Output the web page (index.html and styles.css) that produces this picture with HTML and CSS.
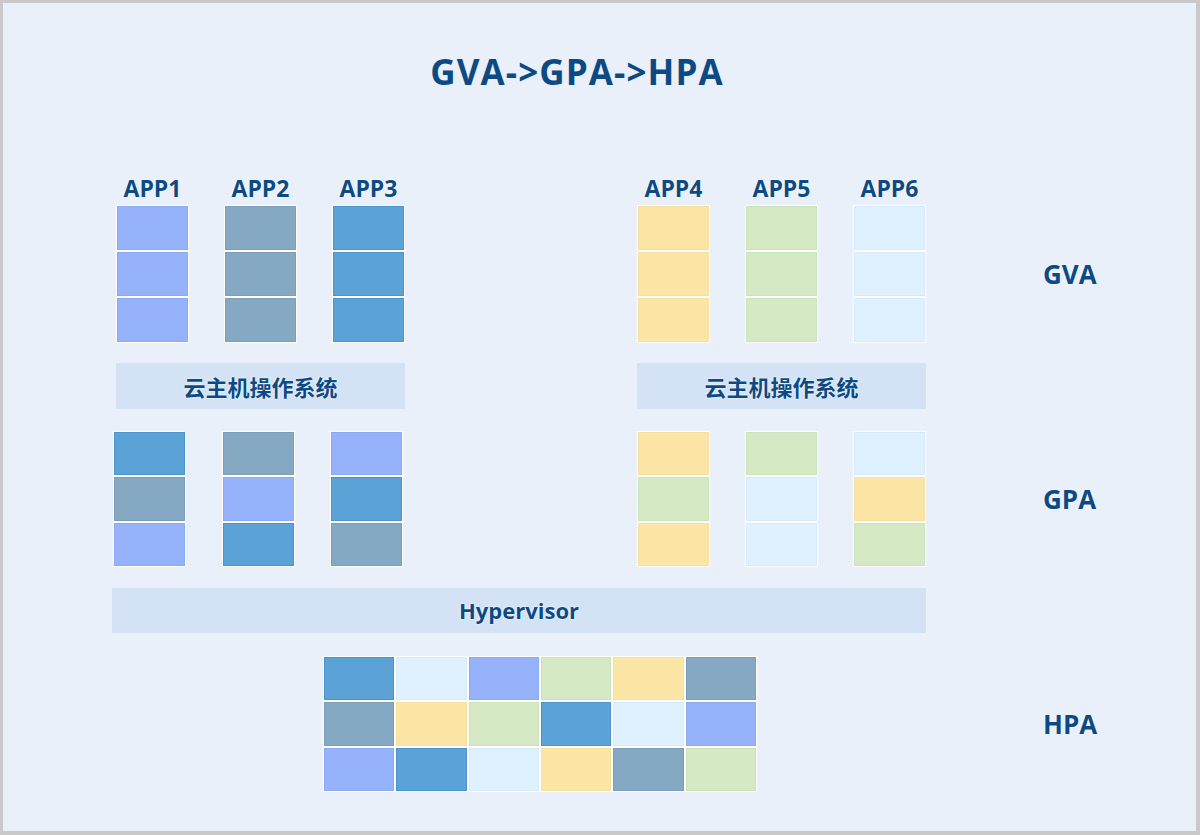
FILE: index.html
```html
<!DOCTYPE html>
<html lang="zh-CN">
<head>
<meta charset="utf-8">
<title>GVA->GPA->HPA</title>
<link rel="stylesheet" href="styles.css">
</head>
<body>
<div class="frame">
  <h1 class="title">GVA-&gt;GPA-&gt;HPA</h1>

  <div class="app-labels">
    <div class="group group-gva-left">
      <div class="app-label">APP1</div>
      <div class="app-label">APP2</div>
      <div class="app-label">APP3</div>
    </div>
    <div class="group group-gva-right">
      <div class="app-label">APP4</div>
      <div class="app-label">APP5</div>
      <div class="app-label">APP6</div>
    </div>
  </div>

  <div class="layer layer-gva">
    <div class="groups">
      <div class="group group-gva-left">
        <div class="stack"><div class="cell c-peri"></div><div class="cell c-peri"></div><div class="cell c-peri"></div></div>
        <div class="stack"><div class="cell c-slate"></div><div class="cell c-slate"></div><div class="cell c-slate"></div></div>
        <div class="stack"><div class="cell c-blue"></div><div class="cell c-blue"></div><div class="cell c-blue"></div></div>
      </div>
      <div class="group group-gva-right">
        <div class="stack"><div class="cell c-yellow"></div><div class="cell c-yellow"></div><div class="cell c-yellow"></div></div>
        <div class="stack"><div class="cell c-green"></div><div class="cell c-green"></div><div class="cell c-green"></div></div>
        <div class="stack"><div class="cell c-sky"></div><div class="cell c-sky"></div><div class="cell c-sky"></div></div>
      </div>
    </div>
    <div class="side-label">GVA</div>
  </div>

  <div class="os-row">
    <div class="bar os-bar os-left">云主机操作系统</div>
    <div class="bar os-bar os-right">云主机操作系统</div>
  </div>

  <div class="layer layer-gpa">
    <div class="groups">
      <div class="group group-gpa-left">
        <div class="stack"><div class="cell c-blue"></div><div class="cell c-slate"></div><div class="cell c-peri"></div></div>
        <div class="stack"><div class="cell c-slate"></div><div class="cell c-peri"></div><div class="cell c-blue"></div></div>
        <div class="stack"><div class="cell c-peri"></div><div class="cell c-blue"></div><div class="cell c-slate"></div></div>
      </div>
      <div class="group group-gpa-right">
        <div class="stack"><div class="cell c-yellow"></div><div class="cell c-green"></div><div class="cell c-yellow"></div></div>
        <div class="stack"><div class="cell c-green"></div><div class="cell c-sky"></div><div class="cell c-sky"></div></div>
        <div class="stack"><div class="cell c-sky"></div><div class="cell c-yellow"></div><div class="cell c-green"></div></div>
      </div>
    </div>
    <div class="side-label">GPA</div>
  </div>

  <div class="bar hv-bar">Hypervisor</div>

  <div class="layer layer-hpa">
    <div class="hpa-wrap">
      <div class="hpa-grid">
        <div class="cell c-blue"></div><div class="cell c-sky"></div><div class="cell c-peri"></div><div class="cell c-green"></div><div class="cell c-yellow"></div><div class="cell c-slate"></div>
        <div class="cell c-slate"></div><div class="cell c-yellow"></div><div class="cell c-green"></div><div class="cell c-blue"></div><div class="cell c-sky"></div><div class="cell c-peri"></div>
        <div class="cell c-peri"></div><div class="cell c-blue"></div><div class="cell c-sky"></div><div class="cell c-yellow"></div><div class="cell c-slate"></div><div class="cell c-green"></div>
      </div>
    </div>
    <div class="side-label">HPA</div>
  </div>
</div>
</body>
</html>
```

FILE: styles.css
```css
html, body {
  margin: 0;
  padding: 0;
}

body {
  font-family: "Open Sans", "Noto Sans CJK SC", "Noto Sans", sans-serif;
  color: #0d4a84;
}

.frame {
  width: 1200px;
  height: 835px;
  box-sizing: border-box;
  background: #e9f0fa;
  border-style: solid;
  border-color: #c9c9c9;
  border-width: 3px 4px 4px 3px;
  padding-top: 46px;
  overflow: hidden;
}

.title {
  margin: 0 0 0 109px;
  width: 930px;
  text-align: center;
  font-size: 35px;
  line-height: 46px;
  font-weight: 700;
  letter-spacing: 1.1px;
}

/* app labels */
.app-labels {
  display: flex;
  margin-top: 81px;
  height: 24px;
}

.app-label {
  width: 73px;
  text-align: center;
  font-size: 23px;
  line-height: 24px;
  font-weight: 700;
  white-space: nowrap;
  text-shadow: 0 0 2px #fff, 0 0 1px #fff;
}

.group {
  display: flex;
  gap: 35px;
}

.group-gva-left { margin-left: 113px; }
.group-gva-right { margin-left: 232px; }
.group-gpa-left { margin-left: 110px; gap: 35.5px; }
.group-gpa-right { margin-left: 234px; }

/* layers with side labels */
.layer {
  display: grid;
  grid-template-columns: 1040px auto;
  align-items: center;
}

.layer-gva { margin-top: 5px; }
.layer-gpa { margin-top: 22px; }
.layer-hpa { margin-top: 23px; }

.groups {
  display: flex;
}

.side-label {
  font-size: 26px;
  font-weight: 700;
  line-height: 30px;
  text-shadow: 0 0 2px #fff;
}

/* stacks of memory cells */
.stack {
  width: 73px;
  height: 138px;
  box-sizing: border-box;
  background: #fff;
  padding: 1px;
  display: flex;
  flex-direction: column;
  gap: 2px;
}

.layer-gpa .stack { height: 136px; }

.stack .cell {
  flex: 1;
}

.cell { box-sizing: border-box; }

.c-peri   { background: #95b2fb; box-shadow: inset 0 0 0 1px #8aa9f6; }
.c-slate  { background: #85a9c3; box-shadow: inset 0 0 0 1px #7b9fba; }
.c-blue   { background: #5ba3d6; box-shadow: inset 0 0 0 1px #4a95cd; }
.c-yellow { background: #fce6a6; box-shadow: inset 0 0 0 1px #f7df9c; }
.c-green  { background: #d4e9c4; box-shadow: inset 0 0 0 1px #cbe3bb; }
.c-sky    { background: #dff0fe; box-shadow: inset 0 0 0 1px #d6eaf9; }

/* bars */
.bar {
  background: #d3e3f5;
  text-align: center;
  font-weight: 700;
  text-shadow: 0 0 2px #fff, 0 0 1px #fff;
}

.os-row {
  display: flex;
  margin-top: 20px;
}

.os-bar {
  width: 289px;
  height: 46px;
  line-height: 46px;
  font-size: 22px;
  font-family: "Noto Sans CJK SC", "Open Sans", sans-serif;
}

.os-left { margin-left: 113px; }
.os-right { margin-left: 232px; }

.hv-bar {
  margin: 21px 0 0 109px;
  width: 814px;
  height: 45px;
  line-height: 45px;
  font-size: 22px;
}

/* HPA grid */
.hpa-wrap {
  padding-left: 320px;
}

.hpa-grid {
  width: 434px;
  height: 136px;
  box-sizing: border-box;
  background: #fff;
  padding: 1px;
  display: grid;
  grid-template-columns: repeat(6, 1fr);
  grid-template-rows: repeat(3, 1fr);
  gap: 2px;
}
```
